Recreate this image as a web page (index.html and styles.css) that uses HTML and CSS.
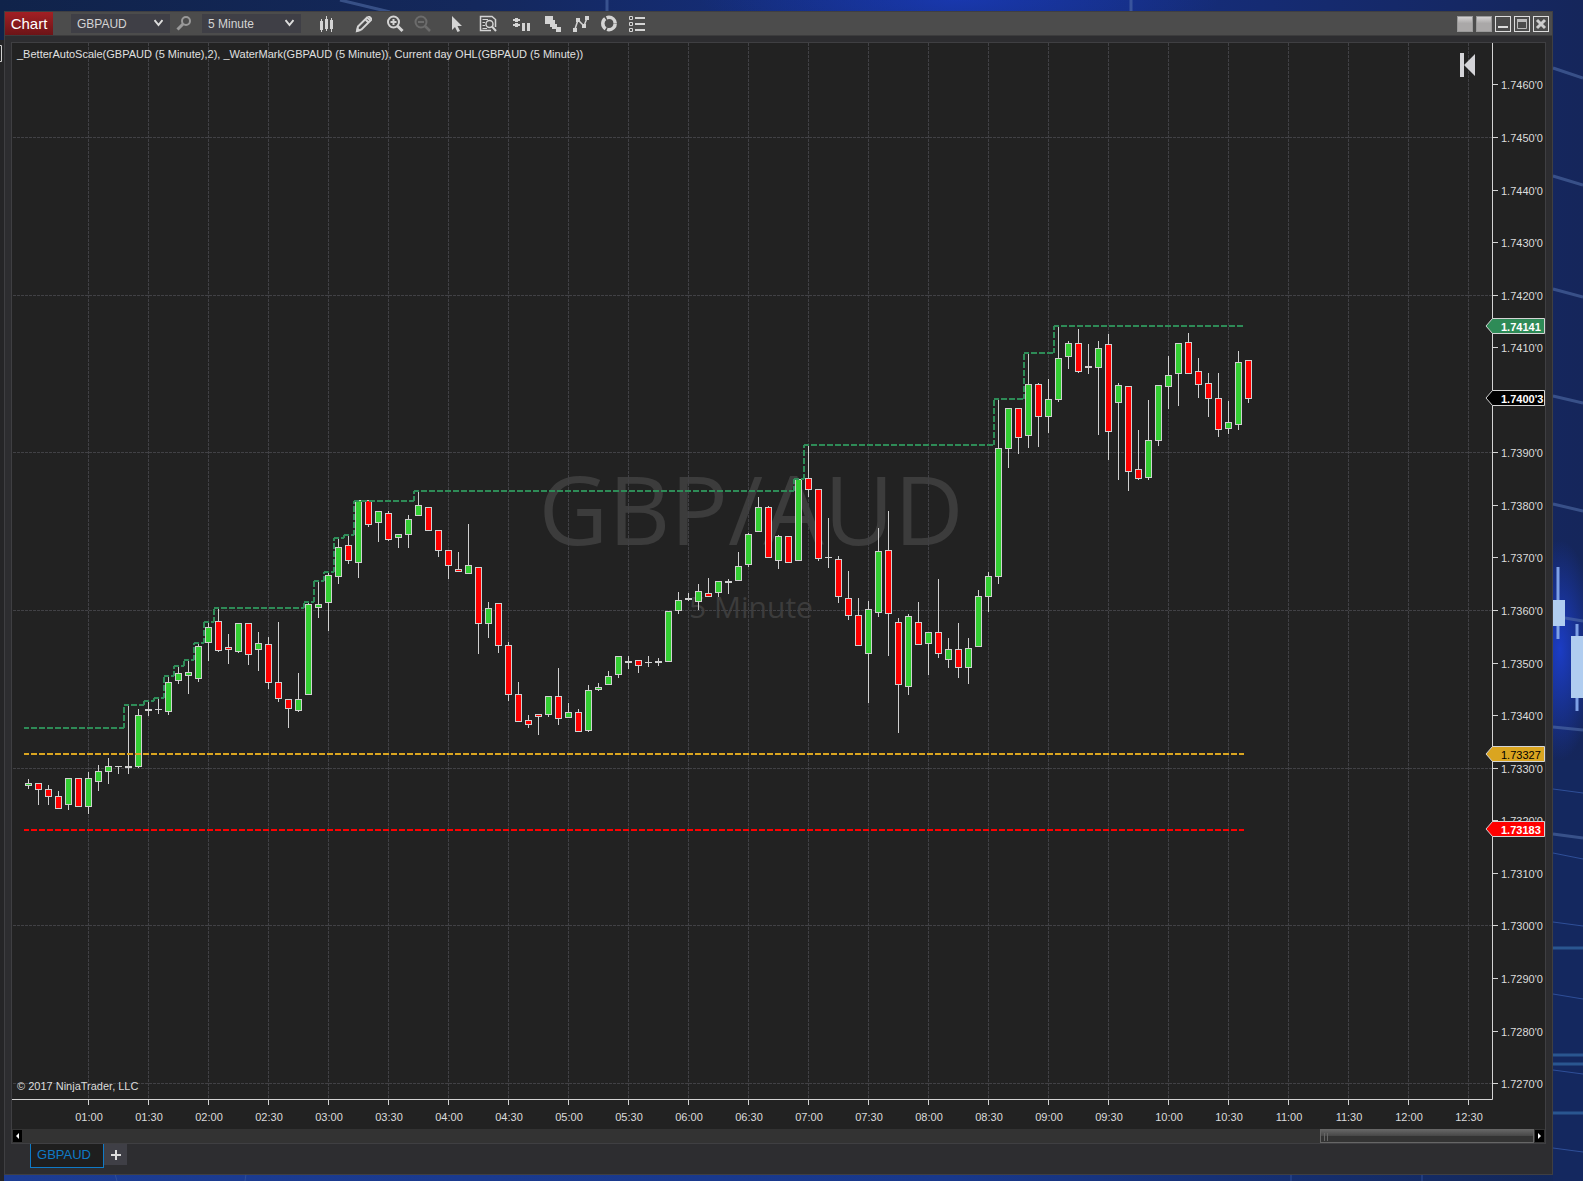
FILE: index.html
```html
<!DOCTYPE html>
<html lang="en">
<head>
<meta charset="utf-8">
<meta name="viewport" content="width=device-width, initial-scale=1">
<title>Chart - GBPAUD</title>
<link rel="stylesheet" href="styles.css">
</head>
<body>
<svg class="wallpaper" viewBox="0 0 1583 1181" preserveAspectRatio="xMaxYMid slice" aria-hidden="true">
  <defs>
    <linearGradient id="sky" x1="0" x2="1" y1="0" y2="0">
      <stop offset="0" stop-color="#10234a"/><stop offset=".3" stop-color="#14285c"/>
      <stop offset=".6" stop-color="#15308a"/><stop offset="1" stop-color="#15265b"/>
    </linearGradient>
    <radialGradient id="glow"><stop offset="0" stop-color="#1c3fd0"/><stop offset="1" stop-color="#1c3fd0" stop-opacity="0"/></radialGradient>
    <linearGradient id="floor" x1="0" x2="1" y1="0" y2="0">
      <stop offset="0" stop-color="#1c3c92"/><stop offset=".6" stop-color="#18388c"/><stop offset="1" stop-color="#132757"/>
    </linearGradient>
  </defs>
  <rect width="1583" height="1181" fill="url(#sky)"/>
  <rect y="1100" width="1583" height="81" fill="url(#floor)"/>
  <rect x="1553" y="760" width="30" height="421" fill="#14285f"/>
  <ellipse cx="1560" cy="650" rx="36" ry="110" fill="url(#glow)" opacity=".9"/>
  <ellipse cx="960" cy="0" rx="260" ry="40" fill="url(#glow)" opacity=".5"/>
  <g stroke="#5673ad" stroke-width="3" opacity=".55">
    <path d="M340 0L390 12M607 0V12M1131 0V12M1553 68L1583 78M1553 176L1583 185M1553 289L1583 297M1553 396L1583 403M1553 504L1583 511M1553 616L1583 621M1553 727L1583 730M1553 834L1583 838"/>
  </g>
  <path d="M1553 948H1583M1553 1055H1583M1553 1064H1583M1553 1113H1583" stroke="#2a5690" stroke-width="3"/>
  <path d="M1553 789L1583 793M1553 853L1583 859M1553 922L1583 926M1553 994L1583 999M1553 1070L1583 1074M1553 1148L1583 1152M115 1174L117 1181M246 1174L245 1181M1291 1174V1181M1422 1174V1181" stroke="#2f4f98"/>
  <path d="M1558 567V639M1577 624V711" stroke="#7ea0e6" stroke-width="3"/>
  <path d="M1553 600h12v26h-12zM1571 636h12v62h-12z" fill="#b0cdf0"/>
  <path d="M0 40H4V1181H0z" fill="#252527"/>
  <path d="M-3 45.500H1.500V61.500H-3" fill="none" stroke="#d0d0d0"/>
</svg>

<main class="window">
  <header class="toolbar">
    <h1 class="title">Chart</h1>
    <span class="picker">
      <select aria-label="Instrument"><option>GBPAUD</option></select>
      <svg viewBox="0 0 9 8" aria-hidden="true"><path d="M.5 1L4.500 6L8.500 1" fill="none" stroke="#ddd" stroke-width="2"/></svg>
    </span>
    <button class="tool search" aria-label="Search instrument">
      <svg viewBox="0 0 18 18"><g fill="none" stroke="#999" stroke-width="2"><circle cx="10" cy="6" r="4"/><path d="M7 9L1.500 14.500" stroke-width="3"/></g></svg>
    </button>
    <span class="picker">
      <select aria-label="Interval"><option>5 Minute</option></select>
      <svg viewBox="0 0 9 8" aria-hidden="true"><path d="M.5 1L4.500 6L8.500 1" fill="none" stroke="#ddd" stroke-width="2"/></svg>
    </span>

    <nav class="tools" aria-label="Chart tools">
      <button class="tool" aria-label="Chart style">
        <svg viewBox="0 0 18 18"><path d="M2 6h3v9H2zM7 4h3v10H7zM12 5h3v9h-3zM3 4h1v13H3zM8 1h1v15H8zM13 3h1v14h-1z" fill="#d4d4d4"/></svg>
      </button>
      <button class="tool gap-l" aria-label="Drawing tools">
        <svg viewBox="0 0 18 18"><path d="M3 11.500L12 2.500L15.500 5.500L6.500 14.500L2 16zM10.500 4.500L13.500 7.500" fill="none" stroke="#d4d4d4" stroke-width="2"/><path d="M1 17l1-5l4 4zM12 1h3l2 2v3z" fill="#d4d4d4"/></svg>
      </button>
      <button class="tool gap-s" aria-label="Zoom in">
        <svg viewBox="0 0 18 18"><g fill="none" stroke="#d4d4d4" stroke-width="2"><circle cx="7.500" cy="7" r="5.500"/><path d="M4.500 7h6M7.500 4v6"/><path d="M11.500 11L16.500 16" stroke-width="3"/></g></svg>
      </button>
      <button class="tool" aria-label="Zoom out" disabled>
        <svg viewBox="0 0 18 18"><g fill="none" stroke="#6c6c6c" stroke-width="2"><circle cx="7" cy="7" r="5.500"/><path d="M4 7h6"/><path d="M11 11L16 16" stroke-width="2.500"/></g></svg>
      </button>
      <button class="tool gap-m" aria-label="Cursor">
        <svg viewBox="0 0 18 18"><path d="M4 1V15L7 12L9.500 17L12 16L9.500 11H14z" fill="#d4d4d4"/></svg>
      </button>
      <button class="tool gap-s" aria-label="Data box">
        <svg viewBox="0 0 18 18"><path d="M16.500 12V4.500L13 1.500H1.500V15.500H12" fill="none" stroke="#d4d4d4" stroke-width="1.500"/><path d="M3.500 4.500H9M3.500 7.500H6M3.500 10.500H6M3.500 13.500H8" stroke="#d4d4d4"/><circle cx="10.500" cy="9" r="3.500" fill="none" stroke="#d4d4d4" stroke-width="1.500"/><path d="M13 11.500L17 16" stroke="#d4d4d4" stroke-width="2"/></svg>
      </button>
      <button class="tool gap-m" aria-label="Chart trader">
        <svg viewBox="0 0 18 18"><path d="M0 4h7v2H0zM0 9h7v2H0zM9 8h3v8H9zM14 8h3v8h-3zM2 3h3v4H2zM2 8h3v4H2z" fill="#d4d4d4"/></svg>
      </button>
      <button class="tool gap-s" aria-label="Data series">
        <svg viewBox="0 0 18 18"><path d="M1 1h8v8H1zM6 9h2v3H6zM8 9h5v5H8zM9 5h2v5H9zM13 12h4v5h-5v-3z" fill="#d4d4d4"/></svg>
      </button>
      <button class="tool" aria-label="Indicators">
        <svg viewBox="0 0 18 18"><path d="M3 14L6 5L12 11L15 3" fill="none" stroke="#d4d4d4" stroke-width="1.500"/><path d="M1 13h4v4H1zM4 3h4v4H4zM10 9h4v4h-4zM13 1h4v4h-4z" fill="#d4d4d4"/></svg>
      </button>
      <button class="tool" aria-label="Strategies">
        <svg viewBox="0 0 18 18"><circle cx="9" cy="8.500" r="6.200" fill="none" stroke="#d4d4d4" stroke-width="3.500" stroke-dasharray="11.500 1.480"/></svg>
      </button>
      <button class="tool" aria-label="Properties">
        <svg viewBox="0 0 18 18"><path d="M1.500 1.500h3v3h-3zM1.500 7.500h3v3h-3zM1.500 13.500h3v3h-3z" fill="none" stroke="#d4d4d4"/><path d="M7 3h10M7 9h10M7 15h10" stroke="#d4d4d4" stroke-width="2"/></svg>
      </button>
    </nav>

    <div class="window-buttons">
      <button class="link" aria-label="Instrument link"></button>
      <button class="link" aria-label="Interval link"></button>
      <button class="box" aria-label="Minimize"><svg viewBox="0 0 14 14"><path d="M2 9h10v2H2z" fill="#ddd"/></svg></button>
      <button class="box" aria-label="Maximize"><svg viewBox="0 0 14 14"><path d="M2.500 3.500h9v8h-9z" fill="none" stroke="#bbb"/><path d="M2 2h10v3H2z" fill="#bbb"/></svg></button>
      <button class="box" aria-label="Close"><svg viewBox="0 0 14 14"><path d="M3 3L11 11M11 3L3 11" stroke="#ccc" stroke-width="3"/></svg></button>
    </div>
  </header>

  <section class="panel" aria-label="GBPAUD 5 minute chart">
    <div class="chart">
      <svg id="chart" viewBox="12 43 1533 1086"></svg>
      <p class="indicators">_BetterAutoScale(GBPAUD (5 Minute),2), _WaterMark(GBPAUD (5 Minute)), Current day OHL(GBPAUD (5 Minute))</p>
      <button class="rewind" aria-label="Return to latest bar">
        <svg viewBox="0 0 16 24"><path d="M0 0h4v24H0zM4 12L15 1v22z" fill="#d4d4d8"/></svg>
      </button>
    </div>
    <div class="scroller">
      <button class="arrow" aria-label="Scroll left"><svg viewBox="0 0 9 12"><path d="M6 3v6L3 6z" fill="#fff"/></svg></button>
      <div class="track"><div class="thumb"></div></div>
      <button class="arrow" aria-label="Scroll right"><svg viewBox="0 0 9 12"><path d="M3 3v6l3-3z" fill="#fff"/></svg></button>
    </div>
  </section>

  <footer class="tabs">
    <button class="tab">GBPAUD</button>
    <button class="add" aria-label="New tab"><svg viewBox="0 0 12 12"><path d="M1 6h10M6 1v10" stroke="#ddd" stroke-width="2"/></svg></button>
  </footer>
</main>
<script src="chart.js"></script>
</body>
</html>
```
FILE: styles.css
```css
* { box-sizing: border-box; }

body {
  margin: 0;
  min-height: 100vh;
  display: flex;
  padding: 11px 30px 6px 4px;
  background: #14265b;
  color: #dcdcdc;
  font-family: "Liberation Sans", Arial, sans-serif;
  font-size: 11px;
}

button, select {
  margin: 0;
  padding: 0;
  border: 0;
  border-radius: 0;
  background: none;
  color: inherit;
  font: inherit;
}

svg { display: block; }

.wallpaper {
  position: fixed;
  inset: 0;
  width: 100%;
  height: 100%;
  z-index: -1;
}

.window {
  flex: 1;
  min-width: 0;
  display: flex;
  flex-direction: column;
  border: 1px solid #3f3f42;
  background: #2d2d30;
}

.toolbar {
  display: flex;
  align-items: center;
  height: 24px;
  background: #4c4c4c;
  border-bottom: 1px solid #3c3c3d;
}

.title {
  margin: 0 18px 0 0;
  width: 48px;
  height: 23px;
  line-height: 23px;
  text-align: center;
  font-size: 15px;
  font-weight: normal;
  color: #fff;
  background: linear-gradient(#a32024, #6c1417);
}

.picker {
  position: relative;
  width: 99px;
  height: 19px;
}

.picker select {
  appearance: none;
  width: 100%;
  height: 100%;
  padding-left: 6px;
  background: #3f3f46;
  color: #d4d4d4;
  font-size: 12px;
}

.picker svg {
  position: absolute;
  top: 5px;
  right: 7px;
  width: 9px;
  height: 8px;
  pointer-events: none;
}

.tool, .tool svg { width: 18px; height: 18px; }
.search { margin: 0 8px 0 6px; }

.tools {
  display: flex;
  gap: 10px;
  margin-left: 17px;
}

.gap-s { margin-left: 3px; }
.gap-m { margin-left: 6px; }
.gap-l { margin-left: 9px; }

.window-buttons {
  display: flex;
  gap: 3px;
  margin-left: auto;
  padding-right: 3px;
}

.link, .box { width: 16px; height: 16px; }
.link { background: linear-gradient(#d4d2d2, #aaa8a8 45%); border: 1px solid #999; }
.box { border: 1px solid #ddd; }
.box svg { width: 14px; height: 14px; }

.panel {
  margin: 6px 6px 0;
  border: 1px solid #3f3f42;
  background: #222;
}

.chart { position: relative; }
.chart > svg { width: 100%; height: auto; }

#chart text { fill: #dcdcdc; font-size: 11px; }
#chart .grid { stroke: #414145; stroke-dasharray: 3 1; }
#chart .axis { stroke: #d4d4d4; fill: none; }
#chart .level { fill: none; stroke-width: 2; stroke-dasharray: 6 2; stroke-dashoffset: 1; }
#chart .time { text-anchor: middle; }
#chart .mark { fill: #3c3c3c; font-family: "Open Sans", sans-serif; text-anchor: middle; }
#chart .mark-name { font-size: 96px; }
#chart .mark-interval { font-size: 30px; }
#chart .tag { stroke: #d4d4d4; }
#chart .tag-text { font-weight: bold; fill: #fff; }
#chart .tag-dark { font-weight: normal; fill: #000; }

.indicators {
  position: absolute;
  top: 4px;
  left: 5px;
  margin: 0;
  line-height: 14px;
  color: #e0e0e0;
}

.rewind {
  position: absolute;
  top: 10px;
  right: 69px;
}
.rewind svg { width: 16px; height: 24px; }

.scroller {
  display: flex;
  gap: 1px;
  height: 14px;
  padding: 0 1px;
  background: #333;
}

.arrow { align-self: center; background: #000; }
.arrow svg { width: 9px; height: 12px; }

.track { flex: 1; display: flex; justify-content: flex-end; }

.thumb {
  flex: 0 0 214px;
  border: 1px solid #666;
  background:
    linear-gradient(#666, #666) 3px 3px / 1px 8px no-repeat,
    linear-gradient(#666, #666) 6px 3px / 1px 8px no-repeat,
    linear-gradient(#646464, #484848 48%, #333 52%);
}

.tabs {
  display: flex;
  align-items: flex-start;
  padding: 0 25px 6px;
}

.tab {
  width: 74px;
  height: 24px;
  padding: 0 6px 3px 0;
  border: 1px solid #0f7ac6;
  border-top: 0;
  background: #1e1e1e;
  color: #0f7ac6;
  font-size: 13px;
}

.add {
  width: 23px;
  height: 21px;
  display: grid;
  place-items: center;
  background: #3f3f46;
}
.add svg { width: 12px; height: 12px; }
```
FILE: chart.js
```js
// Each bar: wick top, body top, body bottom, wick bottom, kind (g up, r down, d doji)
const bars = `
779 783 786 789 g|783 783 790 805 r|785 789 797 805 r|791 796 809 809 r|778 778 805 810 g|778 778 807 807 r
772 778 807 814 g|765 771 782 791 g|758 766 772 784 g|766 766 767 774 d|706 766 768 774 d|709 715 767 768 g
702 709 711 716 d|699 709 710 714 d|677 682 712 715 g|667 673 681 684 g|661 672 676 694 g|644 646 679 682 g
623 627 643 661 g|609 621 651 652 r|634 647 650 664 r|623 623 652 653 g|623 623 655 665 r|632 643 650 671 g
637 644 683 689 r|622 682 699 702 r|699 699 709 728 r|673 699 711 712 g|603 604 695 695 g|582 604 608 618 g
573 575 603 631 g|539 547 577 584 g|535 545 561 564 r|500 500 563 578 g|500 500 525 527 r|511 511 523 542 g
511 513 540 541 r|534 534 538 548 g|515 519 535 548 g|492 505 516 516 g|507 507 531 531 r|530 530 551 557 r
550 550 566 579 r|552 569 572 572 r|524 565 574 574 g|567 567 624 654 r|602 608 624 638 g|603 603 646 653 r
642 645 695 701 r|682 694 722 722 r|715 720 725 728 r|714 714 717 735 r|696 696 715 717 g|668 696 719 725 r
703 712 718 718 g|709 712 732 732 r|685 690 731 732 g|683 687 690 691 g|671 676 685 685 g|656 656 675 678 g
656 661 663 669 d|660 660 666 673 r|656 662 663 667 d|658 661 663 666 d|611 611 662 662 g|592 600 611 614 g
593 598 600 601 d|584 591 602 610 g|578 593 597 597 r|581 581 593 597 g|579 581 583 594 d|552 566 581 581 g
533 534 565 567 g|497 507 532 532 g|506 507 558 558 r|535 536 561 569 g|536 536 563 563 r|478 479 561 561 g
446 478 490 497 r|489 489 559 561 r|518 557 558 568 d|556 559 597 603 r|571 598 616 620 r|598 615 646 646 r
601 609 654 703 g|528 551 613 617 g|511 550 614 656 r|618 622 685 733 r|614 616 687 695 g|602 622 645 645 r
632 632 644 675 g|579 632 654 658 r|638 649 660 668 g|623 649 668 678 r|638 648 668 684 g|590 596 647 647 g
572 576 597 612 g|400 448 577 584 g|408 408 449 468 g|408 408 438 454 r|354 384 436 448 g|383 384 417 447 r
379 399 417 433 g|327 358 400 402 g|341 343 357 369 g|329 343 372 373 r|344 366 368 374 d|341 348 368 435 g
334 344 432 460 r|383 385 403 480 g|386 386 472 491 r|430 469 479 480 r|400 440 478 480 g|385 385 441 446 g
356 375 387 409 g|343 343 374 406 g|333 342 374 374 r|358 371 385 398 r|373 383 399 417 r|373 398 430 437 r
401 422 429 434 g|351 362 425 430 g|360 360 399 403 r`.trim().split(/[|\n]/);

// Running day high: [x where the level starts, y]
const highs = [[24, 728], [124, 705], [144, 701], [154, 698], [164, 676], [174, 666], [184, 660],
  [194, 643], [204, 622], [214, 608], [304, 602], [314, 581], [324, 572], [334, 538], [344, 535],
  [354, 501], [414, 491], [794, 479], [804, 445], [994, 399], [1024, 353], [1054, 326]];

const LEFT = 12, RIGHT = 1492, TOP = 43, BOTTOM = 1099, LAST = 1244;
const yOf = (pips) => Math.round(137 + (17450 - pips) * 5.256);
const svg = document.getElementById('chart');

function add(name, attrs, text) {
  const el = document.createElementNS('http://www.w3.org/2000/svg', name);
  for (const key in attrs) el.setAttribute(key, attrs[key]);
  if (text) el.textContent = text;
  svg.append(el);
}

add('text', { x: 751, y: 545, class: 'mark mark-name' }, 'GBP/AUD');
add('text', { x: 751, y: 618, class: 'mark mark-interval' }, '5 Minute');

for (let i = 0; i < 24; i++) {
  const x = 88 + i * 60;
  const clock = String(Math.floor(i / 2) + 1).padStart(2, '0') + (i % 2 ? ':30' : ':00');
  add('path', { d: `M${x + .5} ${TOP}V${BOTTOM}`, class: 'grid' });
  add('path', { d: `M${x + .5} ${BOTTOM}v6`, class: 'axis' });
  add('text', { x: x + 1, y: 1121, class: 'time' }, clock);
}

for (let pips = 17450; pips >= 17270; pips -= 30) {
  add('path', { d: `M${LEFT + 1} ${yOf(pips) + .5}H${RIGHT}`, class: 'grid' });
}

add('text', { x: 17, y: 1090 }, '© 2017 NinjaTrader, LLC');
add('path', { d: `M${LEFT} ${BOTTOM + .5}H${RIGHT + .5}V${TOP}`, class: 'axis' });

for (let pips = 17460; pips >= 17270; pips -= 10) {
  const y = yOf(pips);
  add('path', { d: `M${RIGHT} ${y + .5}h6`, class: 'axis' });
  add('text', { x: 1501, y: y + 5 }, `1.${String(pips).slice(1)}'0`);
}

bars.forEach((bar, i) => {
  const [high, top, bottom, low, kind] = bar.split(' ').map((v, k) => (k < 4 ? +v : v));
  const x = 28 + i * 10;
  add('rect', { x, y: high, width: 1, height: low - high, fill: '#d0d0d0' });
  add('rect', { x: x - 3, y: top, width: 7, height: bottom - top, fill: '#d0d0d0' });
  if (kind !== 'd') {
    add('rect', { x: x - 2, y: top + 1, width: 5, height: bottom - top - 2, fill: kind === 'g' ? '#32cd32' : '#f00' });
  }
});

highs.forEach(([x, y], i) => {
  const next = highs[i + 1];
  if (i) add('path', { d: `M${x} ${highs[i - 1][1]}V${y}`, class: 'level', stroke: '#2e8b57' });
  add('path', { d: `M${x} ${y}H${next ? next[0] : LAST}`, class: 'level', stroke: '#2e8b57' });
});
add('path', { d: `M24 754H${LAST}`, class: 'level', stroke: '#daa520' });
add('path', { d: `M24 830H${LAST}`, class: 'level', stroke: '#f00' });

[[17414.1, '1.74141', '#2e8b57'], [17400.3, "1.7400'3", '#000'],
  [17332.7, '1.73327', '#daa520', 'tag-dark'], [17318.3, '1.73183', '#f00']].forEach(([pips, label, fill, extra]) => {
  const y = yOf(pips);
  add('path', { d: `M1486 ${y}l6.500-7.500H1544.500v15H1492.500z`, fill, class: 'tag' });
  add('text', { x: 1501, y: y + 5, class: `tag-text ${extra || ''}` }, label);
});
```
